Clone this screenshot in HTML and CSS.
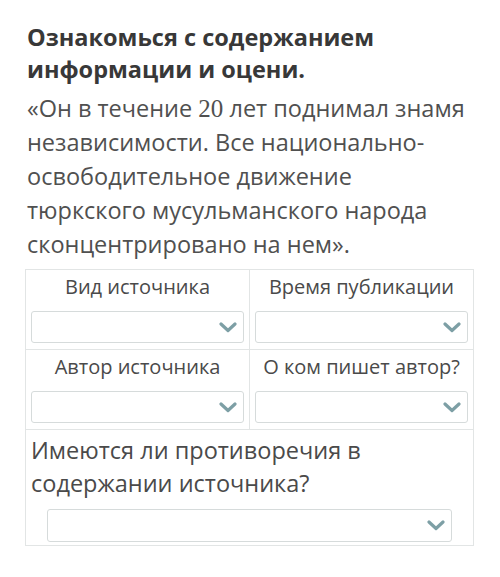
FILE: index.html
```html
<!DOCTYPE html>
<html lang="ru">
<head>
<meta charset="utf-8">
<link rel="stylesheet" href="styles.css">
</head>
<body>
<div class="page">
  <h2 class="title">Ознакомься с содержанием информации и оцени.</h2>
  <p class="quote">«Он в течение <span class="num">20</span> лет поднимал знамя независимости. Все национально-освободительное движение тюркского мусульманского народа сконцентрировано на нем».</p>
  <div class="table">
    <div class="cell">
      <div class="label">Вид источника</div>
      <div class="select"><svg class="chev" viewBox="0 0 18 11"><path d="M2 2 L9 8.5 L16 2"/></svg></div>
    </div>
    <div class="cell">
      <div class="label">Время публикации</div>
      <div class="select"><svg class="chev" viewBox="0 0 18 11"><path d="M2 2 L9 8.5 L16 2"/></svg></div>
    </div>
    <div class="cell">
      <div class="label">Автор источника</div>
      <div class="select"><svg class="chev" viewBox="0 0 18 11"><path d="M2 2 L9 8.5 L16 2"/></svg></div>
    </div>
    <div class="cell">
      <div class="label">О ком пишет автор?</div>
      <div class="select"><svg class="chev" viewBox="0 0 18 11"><path d="M2 2 L9 8.5 L16 2"/></svg></div>
    </div>
    <div class="cell wide">
      <div class="question">Имеются ли противоречия в содержании источника?</div>
      <div class="select select-wide"><svg class="chev" viewBox="0 0 18 11"><path d="M2 2 L9 8.5 L16 2"/></svg></div>
    </div>
  </div>
</div>
</body>
</html>
```

FILE: styles.css
```css
html, body {
  margin: 0;
  padding: 0;
  background: #ffffff;
}
.page {
  padding: 21px 26px 0 27px;
  font-family: "Open Sans", "Noto Sans", sans-serif;
}
.title {
  margin: 0;
  font-size: 23.5px;
  line-height: 32px;
  font-weight: 700;
  color: #383838;
  width: 420px;
}
.quote {
  margin: 6px 0 0 0;
  width: 445px;
  font-size: 23.5px;
  line-height: 34px;
  color: #505050;
  font-weight: 400;
}
.num {
  font-family: "Liberation Serif", "DejaVu Serif", serif;
  font-size: 25px;
  line-height: 1;
}
.table {
  margin-top: 8px;
  margin-left: -2px;
  width: 449px;
  display: grid;
  grid-template-columns: 224px 223px;
  border: 1px solid #e2e5e5;
  box-sizing: border-box;
}
.cell {
  padding: 0 5px 6px 5px;
  border-right: 1px solid #e2e5e5;
  border-bottom: 1px solid #e2e5e5;
  display: flex;
  flex-direction: column;
}
.cell:nth-child(2n) {
  border-right: none;
}
.cell.wide {
  grid-column: 1 / span 2;
  border-right: none;
  border-bottom: none;
  padding-bottom: 3px;
}
.label {
  font-size: 20px;
  line-height: 24px;
  color: #4a4a4a;
  text-align: center;
  padding: 5px 0 12px 0;
  white-space: nowrap;
}
.question {
  font-size: 23.5px;
  line-height: 33px;
  color: #4a4a4a;
  padding: 4px 0 9px 0;
}
.select {
  height: 32px;
  border: 1px solid #d6dbdb;
  border-radius: 3px;
  box-sizing: border-box;
  display: flex;
  align-items: center;
  justify-content: flex-end;
  padding-right: 6px;
  background: #fff;
}
.select-wide {
  width: 405px;
  align-self: center;
  height: 33px;
}
.chev {
  width: 18px;
  height: 11px;
  fill: none;
  stroke: #7d9fa5;
  stroke-width: 3.2;
  stroke-linecap: round;
  stroke-linejoin: round;
}
```
